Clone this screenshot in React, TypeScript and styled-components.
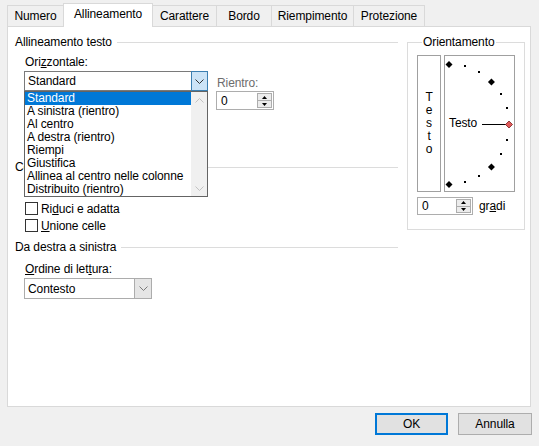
import React from 'react';
import styled, { createGlobalStyle } from 'styled-components';

const Global = createGlobalStyle`
  html, body { margin: 0; padding: 0; background: #f0f0f0; }
  body { font-family: "Liberation Sans", Arial, sans-serif; font-size: 12px; color: #000; }
  * { box-sizing: border-box; }
`;

const Dialog = styled.div`
  width: 539px;
  height: 446px;
  padding: 3px 8px 0 7px;
  display: flex;
  flex-direction: column;
  background: #f0f0f0;
  overflow: hidden;
  letter-spacing: -0.1px;
`;

const TabStrip = styled.div`
  display: flex;
  align-items: flex-end;
  height: 23px;
  position: relative;
  z-index: 2;
`;

const Tab = styled.div<{ $w: number; $active?: boolean }>`
  width: ${p => p.$w}px;
  margin-left: -1px;
  &:first-child { margin-left: 0; }
  height: ${p => (p.$active ? 24 : 21)}px;
  margin-bottom: ${p => (p.$active ? -1 : 0)}px;
  background: ${p => (p.$active ? '#fff' : '#f0f0f0')};
  border: 1px solid #d9d9d9;
  border-bottom: none;
  display: flex;
  align-items: center;
  justify-content: center;
  padding-bottom: ${p => (p.$active ? 2 : 0)}px;
  position: relative;
  z-index: ${p => (p.$active ? 2 : 1)};
  line-height: 15px;
`;

const Panel = styled.div`
  width: 524px;
  height: 381px;
  background: #fff;
  border: 1px solid #d9d9d9;
  display: flex;
  align-items: flex-start;
  gap: 9px;
  padding: 8px 5px 0 7px;
`;

const LeftCol = styled.div`
  width: 383px;
  display: flex;
  flex-direction: column;
`;

const GroupHeader = styled.div<{ $mt?: number }>`
  display: flex;
  align-items: center;
  height: 15px;
  line-height: 15px;
  margin-top: ${p => p.$mt ?? 0}px;
  white-space: nowrap;
  &::after {
    content: '';
    flex: 1;
    height: 1px;
    background: #dcdcdc;
    margin-left: 5px;
  }
`;

const FieldLabel = styled.div<{ $mt?: number }>`
  margin-left: 10px;
  margin-top: ${p => p.$mt ?? 0}px;
  line-height: 15px;
  height: 15px;
`;

const Key = styled.span`
  text-decoration: underline;
`;

const ComboRow = styled.div`
  display: flex;
  align-items: flex-start;
  margin-left: 9px;
  margin-top: 1px;
`;

const ComboWrap = styled.div<{ $w: number }>`
  position: relative;
  width: ${p => p.$w}px;
`;

const Combo = styled.div<{ $h: number; $border: string }>`
  height: ${p => p.$h}px;
  border: 1px solid ${p => p.$border};
  display: flex;
  background: #fff;
`;

const ComboText = styled.div`
  flex: 1;
  padding-left: 3px;
  display: flex;
  align-items: center;
`;

const ComboButton = styled.div<{ $active?: boolean }>`
  width: 17px;
  display: flex;
  align-items: center;
  justify-content: center;
  ${p =>
    p.$active
      ? `margin: -1px -1px -1px 0; border: 1px solid #3c7fb1; background: #cce4f7;`
      : `border-left: 1px solid #acacac; background: #e5e5e5;`}
`;

const DropList = styled.div`
  position: absolute;
  top: 100%;
  left: 0;
  width: 184px;
  height: 106px;
  border: 1px solid #646464;
  background: #fff;
  display: flex;
  z-index: 5;
`;

const ListItems = styled.div`
  flex: 1;
  display: flex;
  flex-direction: column;
`;

const ListItem = styled.div<{ $sel?: boolean }>`
  height: 13px;
  line-height: 13px;
  padding-left: 2px;
  white-space: nowrap;
  background: ${p => (p.$sel ? '#0078d7' : 'transparent')};
  color: ${p => (p.$sel ? '#fff' : '#000')};
`;

const ScrollTrack = styled.div`
  width: 16px;
  background: #f0f0f0;
  display: flex;
  flex-direction: column;
  justify-content: space-between;
  align-items: center;
  padding: 6px 0 5px;
`;

const IndentCol = styled.div`
  margin-left: 8px;
  padding-top: 5px;
  display: flex;
  flex-direction: column;
`;

const DisabledLabel = styled.div`
  color: #6d6d6d;
  line-height: 15px;
  height: 15px;
  margin-left: 1px;
`;

const Spinner = styled.div<{ $w: number; $h: number }>`
  width: ${p => p.$w}px;
  height: ${p => p.$h}px;
  border: 1px solid #adadad;
  background: #fff;
  display: flex;
`;

const SpinValue = styled.div`
  flex: 1;
  padding-left: 4px;
  display: flex;
  align-items: center;
`;

const SpinButtons = styled.div`
  width: 15px;
  display: flex;
  flex-direction: column;
  margin: 1px 1px 1px 0;
`;

const SpinHalf = styled.div`
  flex: 1;
  border: 1px solid #adadad;
  background: #ececec;
  display: flex;
  align-items: center;
  justify-content: center;
  & + & { border-top: none; }
`;

const CheckRow = styled.div<{ $mt?: number }>`
  display: flex;
  align-items: center;
  gap: 3px;
  height: 17px;
  margin-left: 10px;
  margin-top: ${p => p.$mt ?? 0}px;
`;

const CheckBox = styled.span`
  width: 13px;
  height: 13px;
  border: 1px solid #333;
  background: #fff;
  display: inline-block;
`;

const OrientFieldset = styled.fieldset`
  margin: 0;
  padding: 5px 6px 14px 9px;
  width: 118px;
  min-width: 0;
  border: 1px solid #dcdcdc;
`;

const Legend = styled.legend`
  padding: 0 1px;
  margin-left: 5px;
  line-height: 15px;
`;

const OrientBody = styled.div`
  display: flex;
  gap: 3px;
`;

const VerticalBox = styled.div`
  width: 24px;
  height: 137px;
  border: 1px solid #a0a0a0;
  display: flex;
  flex-direction: column;
  align-items: center;
  justify-content: center;
  line-height: 13px;
`;

const Dial = styled.div`
  width: 71px;
  height: 137px;
  border: 1px solid #a0a0a0;
  position: relative;
`;

const DialSvg = styled.svg`
  position: absolute;
  left: 0;
  top: 0;
`;

const DialLabel = styled.span`
  position: absolute;
  left: 4px;
  top: 60px;
  line-height: 15px;
`;

const DegreeRow = styled.div`
  display: flex;
  align-items: center;
  gap: 6px;
  margin-top: 5px;
`;

const Footer = styled.div`
  display: flex;
  justify-content: flex-end;
  gap: 10px;
  padding-top: 6px;
  margin-right: -1px;
`;

const Button = styled.div<{ $w: number; $primary?: boolean }>`
  width: ${p => p.$w}px;
  height: 22px;
  background: #e1e1e1;
  border: 1px solid ${p => (p.$primary ? '#0078d7' : '#adadad')};
  box-shadow: ${p => (p.$primary ? 'inset 0 0 0 1px #0078d7' : 'none')};
  display: flex;
  align-items: center;
  justify-content: center;
`;

const Chevron = ({ color = '#333', up = false }: { color?: string; up?: boolean }) => (
  <svg width="9" height="5" viewBox="0 0 9 5">
    <polyline
      points={up ? '0.5,4.5 4.5,0.5 8.5,4.5' : '0.5,0.5 4.5,4.5 8.5,0.5'}
      fill="none"
      stroke={color}
      strokeWidth="1"
    />
  </svg>
);

const Tri = ({ up }: { up?: boolean }) => (
  <svg width="5" height="3" viewBox="0 0 5 3">
    <polygon points={up ? '0,3 5,3 2.5,0' : '0,0 5,0 2.5,3'} fill="#000" />
  </svg>
);

const SpinControl = ({ w, h }: { w: number; h: number }) => (
  <Spinner $w={w} $h={h}>
    <SpinValue>0</SpinValue>
    <SpinButtons>
      <SpinHalf><Tri up /></SpinHalf>
      <SpinHalf><Tri /></SpinHalf>
    </SpinButtons>
  </Spinner>
);

const tabs = [
  { label: 'Numero', w: 57 },
  { label: 'Allineamento', w: 90, active: true },
  { label: 'Carattere', w: 65 },
  { label: 'Bordo', w: 56 },
  { label: 'Riempimento', w: 83 },
  { label: 'Protezione', w: 72 },
];

const listItems = [
  'Standard',
  'A sinistra (rientro)',
  'Al centro',
  'A destra (rientro)',
  'Riempi',
  'Giustifica',
  'Allinea al centro nelle colonne',
  'Distribuito (rientro)',
];

const cx = 4;
const cy = 68;
const r = 60;
const marks = Array.from({ length: 13 }, (_, i) => {
  const deg = 90 - i * 15;
  const rad = (deg * Math.PI) / 180;
  return { x: cx + r * Math.cos(rad), y: cy - r * Math.sin(rad), big: deg % 45 === 0, red: deg === 0 };
});

const diamond = (x: number, y: number, s: number) =>
  `${x},${y - s} ${x + s},${y} ${x},${y + s} ${x - s},${y}`;

export default function App() {
  return (
    <>
      <Global />
      <Dialog>
        <TabStrip>
          {tabs.map(t => (
            <Tab key={t.label} $w={t.w} $active={t.active}>
              {t.label}
            </Tab>
          ))}
        </TabStrip>
        <Panel>
          <LeftCol>
            <GroupHeader>Allineamento testo</GroupHeader>
            <FieldLabel $mt={5}>
              Ori<Key>z</Key>zontale:
            </FieldLabel>
            <ComboRow>
              <ComboWrap $w={184}>
                <Combo $h={20} $border="#7a7a7a">
                  <ComboText>Standard</ComboText>
                  <ComboButton $active>
                    <Chevron />
                  </ComboButton>
                </Combo>
                <DropList>
                  <ListItems>
                    {listItems.map((it, i) => (
                      <ListItem key={it} $sel={i === 0}>
                        {it}
                      </ListItem>
                    ))}
                  </ListItems>
                  <ScrollTrack>
                    <Chevron color="#c2c2c2" up />
                    <Chevron color="#c2c2c2" />
                  </ScrollTrack>
                </DropList>
              </ComboWrap>
              <IndentCol>
                <DisabledLabel>Rientro:</DisabledLabel>
                <SpinControl w={58} h={19} />
              </IndentCol>
            </ComboRow>
            <GroupHeader $mt={50}>Controllo testo</GroupHeader>
            <CheckRow $mt={25}>
              <CheckBox />
              <span>
                Ri<Key>d</Key>uci e adatta
              </span>
            </CheckRow>
            <CheckRow>
              <CheckBox />
              <span>
                <Key>U</Key>nione celle
              </span>
            </CheckRow>
            <GroupHeader $mt={6}>Da destra a sinistra</GroupHeader>
            <FieldLabel $mt={7}>
              <Key>O</Key>rdine di let<Key>t</Key>ura:
            </FieldLabel>
            <ComboRow>
              <ComboWrap $w={128}>
                <Combo $h={21} $border="#acacac">
                  <ComboText>Contesto</ComboText>
                  <ComboButton>
                    <Chevron color="#7a7a7a" />
                  </ComboButton>
                </Combo>
              </ComboWrap>
            </ComboRow>
          </LeftCol>
          <OrientFieldset>
            <Legend>Orientamento</Legend>
            <OrientBody>
              <VerticalBox>
                {['T', 'e', 's', 't', 'o'].map((c, i) => (
                  <span key={i}>{c}</span>
                ))}
              </VerticalBox>
              <Dial>
                <DialSvg width="69" height="135" viewBox="0 0 69 135">
                  <line x1="37" y1={cy + 0.5} x2="61" y2={cy + 0.5} stroke="#000" strokeWidth="1" />
                  {marks.map((m, i) =>
                    m.red ? (
                      <polygon key={i} points={diamond(m.x, m.y + 0.5, 3.5)} fill="#e05a5a" stroke="#7a1f1f" strokeWidth="0.8" />
                    ) : m.big ? (
                      <polygon key={i} points={diamond(m.x, m.y + 0.5, 3.5)} fill="#000" />
                    ) : (
                      <rect key={i} x={Math.round(m.x) - 1} y={Math.round(m.y) - 1} width="2" height="2" fill="#000" />
                    )
                  )}
                </DialSvg>
                <DialLabel>Testo</DialLabel>
              </Dial>
            </OrientBody>
            <DegreeRow>
              <SpinControl w={56} h={18} />
              <span>
                gr<Key>a</Key>di
              </span>
            </DegreeRow>
          </OrientFieldset>
        </Panel>
        <Footer>
          <Button $w={73} $primary>OK</Button>
          <Button $w={74}>Annulla</Button>
        </Footer>
      </Dialog>
    </>
  );
}
